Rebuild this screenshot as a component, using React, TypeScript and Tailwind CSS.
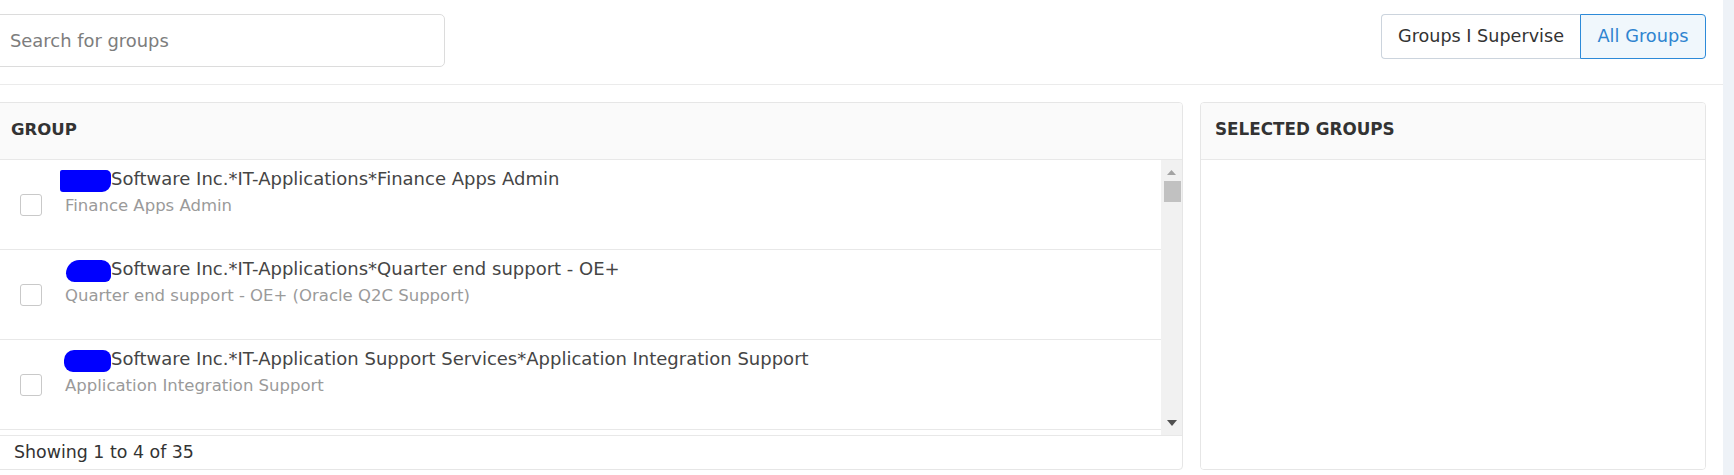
import React from "react";

const rows = [
  {
    title: "Software Inc.*IT-Applications*Finance Apps Admin",
    sub: "Finance Apps Admin",
    blob: "w-[51px] ml-[0px] rounded-[2px_5px_9px_3px]",
  },
  {
    title: "Software Inc.*IT-Applications*Quarter end support - OE+",
    sub: "Quarter end support - OE+ (Oracle Q2C Support)",
    blob: "w-[45px] ml-[6px] rounded-[14px_10px_6px_9px]",
  },
  {
    title: "Software Inc.*IT-Application Support Services*Application Integration Support",
    sub: "Application Integration Support",
    blob: "w-[47px] ml-[4px] rounded-[10px_8px_7px_9px]",
  },
];

function Row({ r }: { r: (typeof rows)[number] }) {
  return (
    <div className="flex h-[90px] shrink-0 border-b border-[#e8e8e8] pl-[23px]">
      <div className="flex items-center">
        <div className="h-[22px] w-[22px] rounded-[3px] border border-[#c9c9c9] bg-white" />
      </div>
      <div className="ml-[18px] flex flex-col pt-[8px]">
        <div className="flex items-start">
          <span className={`mt-[2px] inline-block h-[22px] shrink-0 bg-[#0000ff] ${r.blob}`} />
          <span className="whitespace-nowrap text-[18px] leading-[22px] text-[#454545]">{r.title}</span>
        </div>
        <div className="ml-[5px] mt-[4px] whitespace-nowrap text-[16.5px] leading-[20px] text-[#9a9a9a]">{r.sub}</div>
      </div>
    </div>
  );
}

function Scrollbar() {
  return (
    <div className="flex w-[21px] shrink-0 flex-col items-center bg-[#f1f1f1]">
      <svg width="9" height="5" viewBox="0 0 9 5" className="mt-[10px]">
        <polygon points="4.5,0 9,5 0,5" fill="#a3a3a3" />
      </svg>
      <div className="ml-[1px] mt-[6px] h-[21px] w-[17px] bg-[#c1c1c1]" />
      <div className="flex-1" />
      <svg width="10" height="6" viewBox="0 0 10 6" className="mb-[9px]">
        <polygon points="0,0 10,0 5,6" fill="#505050" />
      </svg>
    </div>
  );
}

export default function App() {
  return (
    <div className="flex h-[475px] w-[1734px] overflow-hidden bg-[#eef2f7] font-['DejaVu_Sans',sans-serif]">
      <div className="flex w-[1723px] shrink-0 flex-col bg-white">
        <div className="flex h-[85px] shrink-0 items-start justify-between border-b border-[#ebebeb] pr-[17px] pt-[14px]">
          <input
            className="-ml-[5px] h-[53px] w-[450px] rounded-[5px] border border-[#dcdcdc] bg-white pl-[14px] text-[17.9px] text-[#333] outline-none placeholder:text-[#7d7d7d]"
            placeholder="Search for groups"
          />
          <div className="flex h-[45px]">
            <div className="flex w-[199px] items-center justify-center rounded-l-[4px] border border-r-0 border-[#ccd4dd] bg-white text-[17.6px] text-[#333]">
              Groups I Supervise
            </div>
            <div className="flex w-[126px] items-center justify-center rounded-r-[4px] border border-[#2d8ad8] bg-[#f0f7fc] text-[17.8px] text-[#2f84d0]">
              All Groups
            </div>
          </div>
        </div>
        <div className="-ml-[4px] flex gap-[17px] pr-[17px] pt-[17px]">
          <div className="flex h-[368px] flex-1 flex-col overflow-hidden rounded-[4px] border border-[#e6e6e6]">
            <div className="flex h-[57px] shrink-0 items-center border-b border-[#e8e8e8] bg-[#fafafa] pb-[2px] pl-[14px]">
              <span className="text-[16.5px] font-bold text-[#333]">GROUP</span>
            </div>
            <div className="flex h-[275px] shrink-0 overflow-hidden">
              <div className="flex flex-1 flex-col overflow-hidden">
                {rows.map((r, i) => (
                  <Row key={i} r={r} />
                ))}
                <div className="h-[90px] shrink-0 bg-white" />
              </div>
              <Scrollbar />
            </div>
            <div className="flex flex-1 items-center border-t border-[#e8e8e8] pl-[17px]">
              <span className="text-[17.4px] text-[#333]">Showing 1 to 4 of 35</span>
            </div>
          </div>
          <div className="flex h-[368px] w-[506px] shrink-0 flex-col overflow-hidden rounded-[4px] border border-[#e6e6e6]">
            <div className="flex h-[57px] shrink-0 items-center border-b border-[#e8e8e8] bg-[#fafafa] pb-[2px] pl-[14px]">
              <span className="text-[16.8px] font-bold text-[#333]">SELECTED GROUPS</span>
            </div>
            <div className="flex-1 bg-white" />
          </div>
        </div>
      </div>
    </div>
  );
}
